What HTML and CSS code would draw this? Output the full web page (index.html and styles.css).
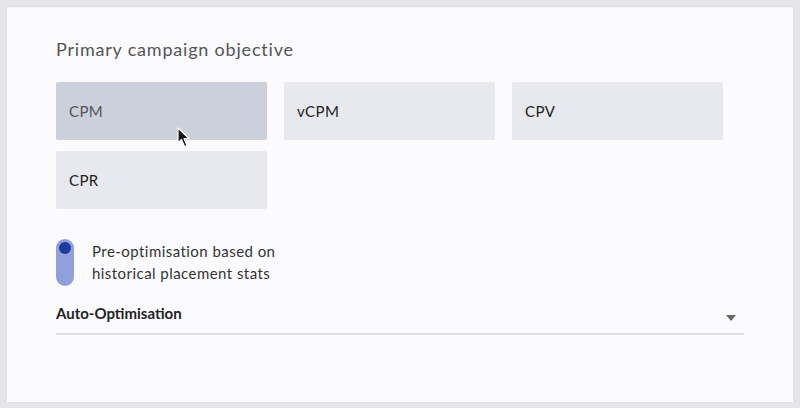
FILE: index.html
```html
<!DOCTYPE html>
<html lang="en">
<head>
    <meta charset="UTF-8">
    <title>Campaign objective</title>
    <link rel="stylesheet" href="styles.css">
</head>
<body>
    <div class="card">
        <h2 class="title">Primary campaign objective</h2>
        <div class="options">
            <div class="option selected">
                CPM
                <!-- mouse pointer -->
                <svg class="pointer" width="14" height="22" viewBox="0 0 14 22">
                    <path d="M1 1 L1 16 L4.5 12.5 L7.5 19.5 L10 18.5 L7 11.5 L12 11.5 Z" fill="#111" stroke="#fff" stroke-width="1.2" stroke-linejoin="round"/>
                </svg>
            </div>
            <div class="option">vCPM</div>
            <div class="option">CPV</div>
            <div class="option">CPR</div>
        </div>
        <div class="toggle-row">
            <div class="toggle"><span class="knob"></span></div>
            <div class="toggle-label">Pre-optimisation based on<br>historical placement stats</div>
        </div>
        <div class="dropdown">
            <span>Auto-Optimisation</span>
            <span class="arrow"></span>
        </div>
    </div>
</body>
</html>
```

FILE: styles.css
```css
body {
    margin: 0;
    padding: 7px;
    background-color: #e6e6ea;
    font-family: Lato, "Open Sans", sans-serif;
}
.card {
    background-color: #fbfbfd;
    height: 395px;
    box-sizing: border-box;
    padding: 30px 49px 0 49px;
    box-shadow: 0 0 2px rgba(0,0,0,0.08);
}
.title {
    margin: 0 0 21px 0;
    font-size: 18px;
    font-weight: 400;
    color: #555;
    line-height: 24px;
    letter-spacing: 0.8px;
}
.options {
    display: grid;
    grid-template-columns: repeat(3, 211px);
    column-gap: 17px;
    row-gap: 11px;
}
.option {
    position: relative;
    height: 58px;
    display: flex;
    align-items: center;
    padding-left: 13px;
    background-color: #e8e9ee;
    border-radius: 2px;
    font-size: 15px;
    letter-spacing: 0.4px;
    color: #222;
}
.option.selected {
    background-color: #cbd0da;
    color: #555;
}
.pointer {
    position: absolute;
    left: 121px;
    top: 45px;
}
.toggle-row {
    display: flex;
    align-items: flex-start;
    gap: 18px;
    margin-top: 30px;
}
.toggle {
    width: 18px;
    height: 47px;
    border-radius: 9px;
    background-color: #8fa0da;
    box-sizing: border-box;
    padding: 3px;
}
.knob {
    display: block;
    width: 12px;
    height: 12px;
    border-radius: 50%;
    background-color: #1f3c9d;
}
.toggle-label {
    font-size: 15px;
    line-height: 22px;
    letter-spacing: 0.45px;
    color: #333;
    margin-top: 1px;
}
.dropdown {
    display: flex;
    justify-content: space-between;
    align-items: center;
    width: 688px;
    height: 40px;
    margin-top: 9px;
    border-bottom: 2px solid #dedee2;
    box-sizing: border-box;
    font-size: 15px;
    font-weight: 700;
    color: #222;
    padding-bottom: 2px;
}
.arrow {
    width: 0;
    height: 0;
    border-left: 5px solid transparent;
    border-right: 5px solid transparent;
    border-top: 6px solid #666;
    margin-right: 8px;
    margin-top: 10px;
}
```
